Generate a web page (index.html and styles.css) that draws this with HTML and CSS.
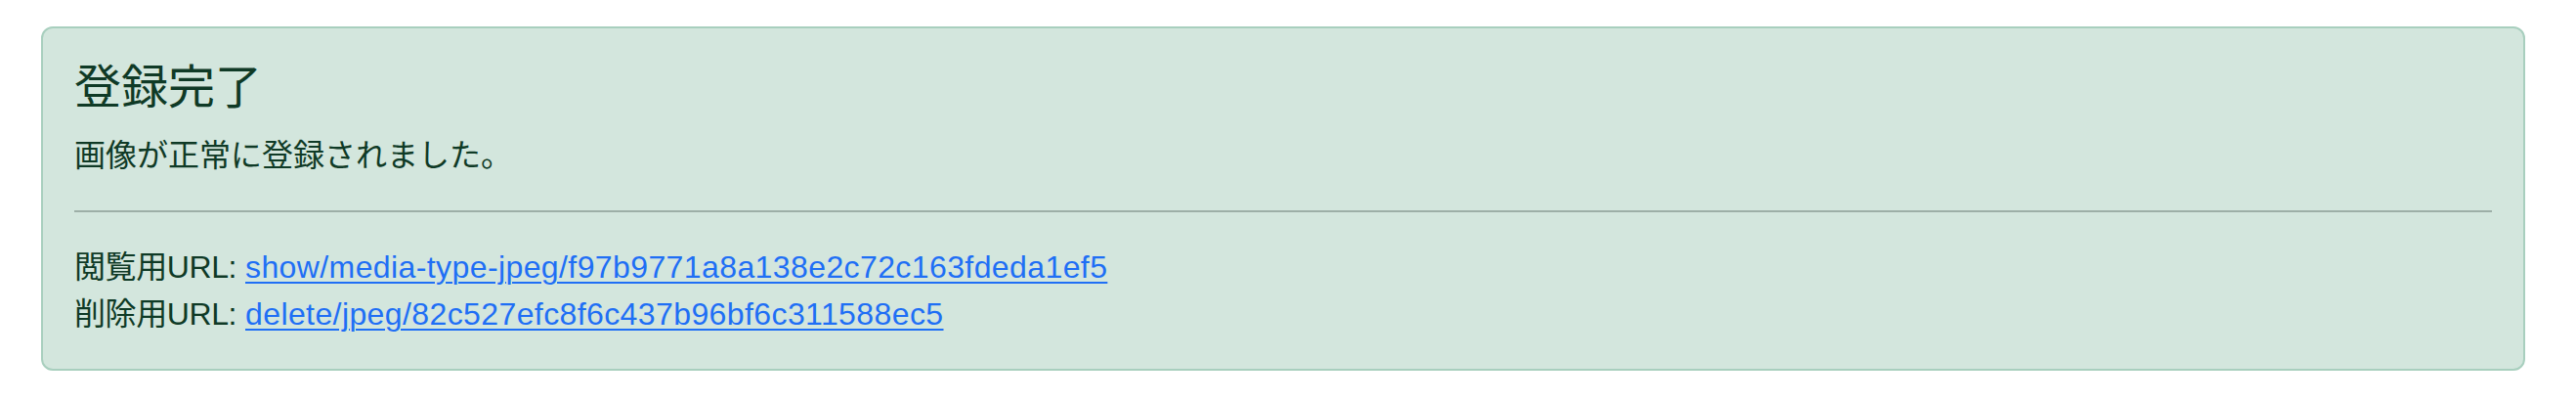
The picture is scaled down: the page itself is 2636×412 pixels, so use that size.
FILE: index.html
```html
<!DOCTYPE html>
<html lang="ja">
<head>
<meta charset="utf-8">
<title>登録完了</title>
<link rel="stylesheet" href="styles.css">
</head>
<body>
<div class="page">
  <div class="alert">
    <h4 class="alert-heading">登録完了</h4>
    <p class="msg">画像が正常に登録されました。</p>
    <hr class="divider">
    <p class="urls">
      <span class="label">閲覧用URL:</span> <a href="#">show/media-type-jpeg/f97b9771a8a138e2c72c163fdeda1ef5</a><br>
      <span class="label">削除用URL:</span> <a href="#">delete/jpeg/82c527efc8f6c437b96bf6c311588ec5</a>
    </p>
  </div>
</div>
</body>
</html>
```

FILE: styles.css
```css
html, body {
  margin: 0;
  padding: 0;
  background: #ffffff;
}
body {
  font-family: "Liberation Sans", "Noto Sans CJK JP", sans-serif;
  font-size: 32px;
  line-height: 1.5;
  color: #212529;
}
.page {
  padding: 27px 52px 0 42px;
}
.alert {
  background: #d3e6dd;
  border: 2px solid #a8cfbe;
  border-radius: 12px;
  color: #0f3a26;
  padding: 32px;
}
.alert-heading {
  margin: 0 0 16px 0;
  font-size: 48px;
  font-weight: 400;
  line-height: 1.2;
}
.msg {
  margin: 0 0 32px 0;
}
.divider {
  margin: 32px 0;
  border: 0;
  border-top: 2px solid #5c6d65;
  opacity: 0.45;
}
.urls {
  margin: 0;
}
.label {
  letter-spacing: -0.4px;
}
.urls a {
  color: #1f6ff5;
  letter-spacing: 0.4px;
  text-decoration: underline;
  text-decoration-thickness: 2px;
  text-underline-offset: 4px;
}
```
